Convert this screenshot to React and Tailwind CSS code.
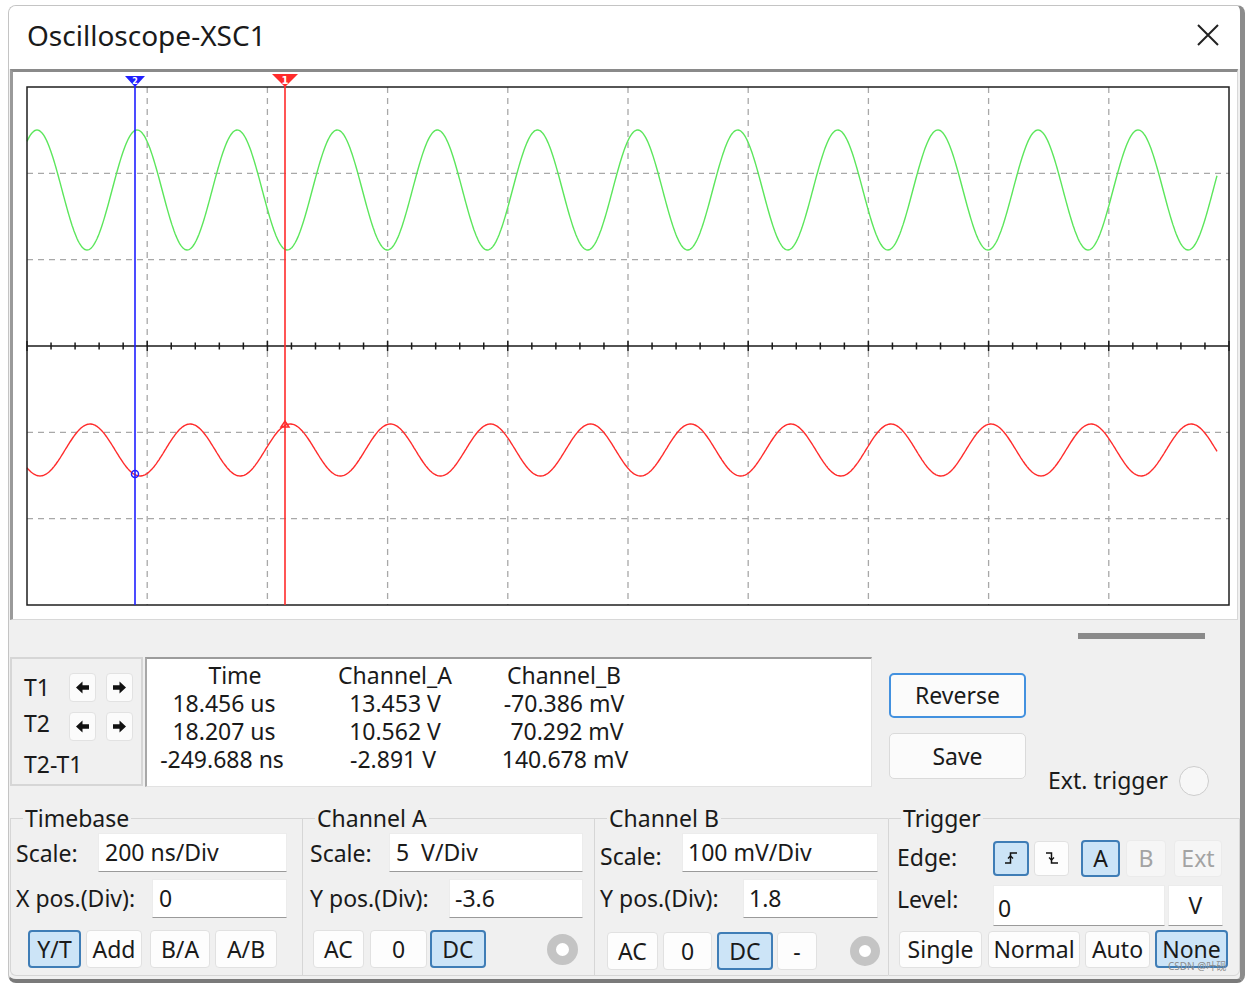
import React from 'react';

// plot geometry, in page pixels
const X0 = 27;
const X1 = 1229;
const Y0 = 87;
const Y1 = 605;
const DX = (X1 - X0) / 10;
const DY = (Y1 - Y0) / 6;

function wavePoints(fn) {
  const pts = [];
  for (let x = 27; x <= 1217; x += 1) pts.push(`${x},${fn(x).toFixed(1)}`);
  return pts.join(' ');
}

const greenWave = wavePoints((x) => 190 - 60 * Math.cos((2 * Math.PI * (x - 37)) / 100.1));
const redWave = wavePoints((x) => 450 + 26 * Math.cos((2 * Math.PI * (x - 40)) / 100.1));

function Scope() {
  const vLines = Array.from({ length: 9 }, (_, i) => X0 + DX * (i + 1));
  const hLines = [1, 2, 4, 5].map((i) => Y0 + DY * i);
  const axisY = Y0 + DY * 3;
  const ticks = Array.from({ length: 51 }, (_, i) => ({ x: X0 + (DX / 5) * i, major: i % 5 === 0 }));

  return (
    <svg width="1224" height="547" viewBox="13 72 1224 547" className="block">
      {vLines.map((x) => (
        <line key={x} x1={x} y1={Y0} x2={x} y2={Y1} stroke="#a8a8a8" strokeWidth="1.3" strokeDasharray="6 5" />
      ))}
      {hLines.map((y) => (
        <line key={y} x1={X0} y1={y} x2={X1} y2={y} stroke="#a8a8a8" strokeWidth="1.3" strokeDasharray="6 5" />
      ))}
      <line x1={X0} y1={axisY} x2={X1} y2={axisY} stroke="#1a1a1a" strokeWidth="1.5" />
      {ticks.map((t) => (
        <line
          key={t.x}
          x1={t.x}
          y1={axisY - (t.major ? 5 : 3.5)}
          x2={t.x}
          y2={axisY + (t.major ? 5 : 3.5)}
          stroke="#1a1a1a"
          strokeWidth="1.5"
        />
      ))}
      <polyline points={greenWave} fill="none" stroke="#5ce65c" strokeWidth="1.4" />
      <polyline points={redWave} fill="none" stroke="#ff2b2b" strokeWidth="1.4" />
      <rect x={X0} y={Y0} width={X1 - X0} height={Y1 - Y0} fill="none" stroke="#1f1f1f" strokeWidth="1.5" />

      {/* cursor 2 (blue) */}
      <line x1="135" y1="80" x2="135" y2={Y1} stroke="#1f1fff" strokeWidth="1.6" />
      <polygon points="125,76 145,76 135,87" fill="#1f1fff" />
      <text x="135" y="84" fontSize="8" fontWeight="700" fill="#fff" textAnchor="middle" fontFamily="DejaVu Sans, sans-serif">2</text>
      <circle cx="135" cy="474" r="3.5" fill="none" stroke="#1f1fff" strokeWidth="1.5" />

      {/* cursor 1 (red) */}
      <line x1="285" y1="80" x2="285" y2={Y1} stroke="#ff2b2b" strokeWidth="1.6" />
      <polygon points="272,74 298,74 285,87" fill="#ff2b2b" />
      <text x="285" y="84" fontSize="10" fontWeight="700" fill="#fff" textAnchor="middle" fontFamily="DejaVu Sans, sans-serif">1</text>
      <path d="M281 427 L285 421 L289 427 Z" fill="none" stroke="#ff2b2b" strokeWidth="1.5" />
    </svg>
  );
}

function Arrow({ dir }) {
  return (
    <svg width="15" height="13" viewBox="0 0 15 13">
      <path
        d={dir === 'left' ? 'M1 6.5 L7.5 0.5 V4.2 H14 V8.8 H7.5 V12.5 Z' : 'M14 6.5 L7.5 0.5 V4.2 H1 V8.8 H7.5 V12.5 Z'}
        fill="#111"
      />
    </svg>
  );
}

function ArrowBtn({ dir }) {
  return (
    <div className="w-[27px] h-[29px] flex items-center justify-center rounded-[4px] bg-[#fbfbfb] border border-[#e2e2e2]">
      <Arrow dir={dir} />
    </div>
  );
}

function Btn({ className, on, off, children }) {
  const look = on
    ? 'bg-[#cce4f7] border-2 border-[#3f7db6] text-[#1a1a1a]'
    : off
    ? 'bg-[#f6f6f6] border border-[#ebebeb] text-[#a3a3a3]'
    : 'bg-[#fdfdfd] border border-[#e1e1e1] text-[#1a1a1a]';
  return (
    <div className={`flex items-center justify-center rounded-[4px] text-[23px] leading-none shrink-0 ${look} ${className}`}>
      {children}
    </div>
  );
}

function Field({ className, children }) {
  return (
    <div className={`bg-white border border-[#ececec] border-b-[#9a9a9a] flex items-center text-[23px] whitespace-pre shrink-0 ${className}`}>
      {children}
    </div>
  );
}

function Radio({ className }) {
  return (
    <div className={`rounded-full border-[9px] border-[#c4c4c4] bg-white shrink-0 ${className}`} />
  );
}

function EdgeIcon({ rising }) {
  return (
    <svg width="14" height="14" viewBox="0 0 14 14">
      <path
        d={rising ? 'M1 12 H6.5 V2 H13' : 'M1 2 H6.5 V12 H13'}
        fill="none"
        stroke="#111"
        strokeWidth="1.5"
      />
      <path
        d={rising ? 'M4 7.5 L6.5 5 L9 7.5' : 'M4 6.5 L6.5 9 L9 6.5'}
        fill="none"
        stroke="#111"
        strokeWidth="1.3"
      />
    </svg>
  );
}

function Group({ title, className, children }) {
  return (
    <fieldset className={`h-[170px] border-t border-l border-b border-[#d6d6d6] shrink-0 ${className}`}>
      <legend className="ml-[12px] px-[2px] text-[23px] leading-[24px]">{title}</legend>
      {children}
    </fieldset>
  );
}

export default function App() {
  return (
    <div className="relative w-[1252px] h-[983px] bg-white pt-[5px] pl-[8px] overflow-hidden font-['Noto_Sans','Open_Sans',sans-serif] text-[#1a1a1a]">
      <div className="w-[1237px] h-[978px] rounded-[8px] overflow-hidden border-t border-l border-[#c4c4c4] border-r-[5px] border-r-[#8c8c8c] border-b-[4px] border-b-[#7a7a7a] bg-[#f0f0f0] flex flex-col">
        {/* title bar */}
        <div className="h-[63px] shrink-0 bg-white flex items-center justify-between pl-[18px] pr-[21px] pb-[6px]">
          <div className="text-[28px]">Oscilloscope-XSC1</div>
          <svg width="22" height="22" viewBox="0 0 22 22" className="mt-[1px]">
            <path d="M1 1 L21 21 M21 1 L1 21" stroke="#222" strokeWidth="2" />
          </svg>
        </div>

        {/* scope screen */}
        <div className="ml-[1px] w-[1228px] h-[551px] shrink-0 bg-white border-t-[3px] border-l-[3px] border-t-[#8a8a8a] border-l-[#9a9a9a] border-r border-b border-r-[#d8d8d8] border-b-[#d8d8d8]">
          <Scope />
        </div>

        {/* control panel */}
        <div className="flex-1 flex flex-col">
          <div className="h-[37px] shrink-0 flex justify-end pt-[13px] pr-[35px]">
            <div className="w-[127px] h-[6px] bg-[#8a8a8a]" />
          </div>

          <div className="h-[130px] shrink-0 flex items-start">
            {/* cursor stepping */}
            <div className="ml-[1px] w-[133px] h-[129px] border-2 border-[#d6d6d6] text-[23px]">
              <div className="mt-[14px] h-[29px] flex items-center">
                <div className="w-[57px] pl-[12px]">T1</div>
                <ArrowBtn dir="left" />
                <div className="w-[10px]" />
                <ArrowBtn dir="right" />
              </div>
              <div className="mt-[10px] h-[29px] flex items-center">
                <div className="w-[57px] pl-[12px] -mt-[6px]">T2</div>
                <ArrowBtn dir="left" />
                <div className="w-[10px]" />
                <ArrowBtn dir="right" />
              </div>
              <div className="mt-[9px] pl-[12px] leading-[28px]">T2-T1</div>
            </div>

            {/* readout */}
            <div className="ml-[2px] w-[727px] h-[130px] bg-white border-t-2 border-l-2 border-t-[#9c9c9c] border-l-[#a8a8a8] border-r border-b border-r-[#e2e2e2] border-b-[#e2e2e2] pt-[2px]">
              <div className="grid grid-cols-[154px_188px_150px] text-[23px] leading-[28px] text-center">
                <div className="pl-[22px]">Time</div>
                <div>Channel_A</div>
                <div>Channel_B</div>
                <div>18.456 us</div>
                <div>13.453 V</div>
                <div>-70.386 mV</div>
                <div>18.207 us</div>
                <div>10.562 V</div>
                <div className="pl-[6px]">70.292 mV</div>
                <div className="pr-[4px]">-249.688 ns</div>
                <div className="pr-[4px]">-2.891 V</div>
                <div className="pl-[2px]">140.678 mV</div>
              </div>
            </div>

            <div className="ml-[17px] w-[137px] flex flex-col">
              <div className="mt-[16px] h-[45px] flex items-center justify-center rounded-[5px] bg-[#fbfbfb] border-2 border-[#4391df] text-[23px]">
                Reverse
              </div>
              <div className="mt-[15px] h-[46px] flex items-center justify-center rounded-[5px] bg-[#fbfbfb] border border-[#dadada] text-[23px]">
                Save
              </div>
            </div>

            <div className="ml-[22px] mt-[108px] h-[31px] flex items-center text-[23px]">
              <span>Ext. trigger</span>
              <div className="ml-[11px] w-[30px] h-[30px] rounded-full border border-[#cdcdcd] bg-[#f7f7f7]" />
            </div>
          </div>

          {/* settings groups */}
          <div className="mt-[19px] flex text-[23px]">
            <Group title="Timebase" className="ml-[1px] w-[292px] rounded-bl-[6px]">
              <div className="mt-[3px] h-[39px] flex items-center">
                <div className="w-[87px] pl-[5px] pt-[2px]">Scale:</div>
                <Field className="w-[189px] h-[39px] pl-[6px]">200 ns/Div</Field>
              </div>
              <div className="mt-[7px] h-[39px] flex items-center">
                <div className="w-[141px] pl-[5px]">X pos.(Div):</div>
                <Field className="w-[135px] h-[39px] pl-[6px]">0</Field>
              </div>
              <div className="mt-[12px] h-[38px] flex items-center">
                <Btn on className="ml-[17px] w-[53px] h-[38px]">Y/T</Btn>
                <Btn className="ml-[5px] w-[56px] h-[38px]">Add</Btn>
                <Btn className="ml-[8px] w-[60px] h-[38px]">B/A</Btn>
                <Btn className="ml-[5px] w-[62px] h-[38px]">A/B</Btn>
              </div>
            </Group>

            <Group title="Channel A" className="w-[292px]">
              <div className="mt-[3px] h-[39px] flex items-center">
                <div className="w-[86px] pl-[7px] pt-[2px]">Scale:</div>
                <Field className="w-[194px] h-[39px] pl-[6px]">5  V/Div</Field>
              </div>
              <div className="mt-[7px] h-[39px] flex items-center">
                <div className="w-[146px] pl-[7px]">Y pos.(Div):</div>
                <Field className="w-[134px] h-[39px] pl-[5px]">-3.6</Field>
              </div>
              <div className="mt-[12px] h-[38px] flex items-center">
                <Btn className="ml-[10px] w-[51px] h-[38px]">AC</Btn>
                <Btn className="ml-[6px] w-[57px] h-[38px]">0</Btn>
                <Btn on className="ml-[3px] w-[56px] h-[38px]">DC</Btn>
                <Radio className="ml-[61px] w-[31px] h-[31px]" />
              </div>
            </Group>

            <Group title="Channel B" className="w-[294px]">
              <div className="mt-[3px] h-[39px] flex items-center">
                <div className="w-[87px] pl-[5px] pt-[8px]">Scale:</div>
                <Field className="w-[196px] h-[39px] pl-[5px]">100 mV/Div</Field>
              </div>
              <div className="mt-[7px] h-[39px] flex items-center">
                <div className="w-[148px] pl-[5px]">Y pos.(Div):</div>
                <Field className="w-[135px] h-[39px] pl-[5px]">1.8</Field>
              </div>
              <div className="mt-[14px] h-[38px] flex items-center">
                <Btn className="ml-[12px] w-[51px] h-[38px]">AC</Btn>
                <Btn className="ml-[5px] w-[49px] h-[38px]">0</Btn>
                <Btn on className="ml-[5px] w-[56px] h-[38px]">DC</Btn>
                <Btn className="ml-[4px] w-[40px] h-[38px]">-</Btn>
                <Radio className="ml-[33px] w-[30px] h-[30px]" />
              </div>
            </Group>

            <Group title="Trigger" className="w-[352px] border-r rounded-br-[6px]">
              <div className="mt-[9px] h-[38px] flex items-center">
                <div className="w-[104px] pl-[8px] -mt-[2px]">Edge:</div>
                <Btn on className="w-[36px] h-[35px]">
                  <EdgeIcon rising />
                </Btn>
                <Btn className="ml-[5px] w-[35px] h-[35px]">
                  <EdgeIcon />
                </Btn>
                <Btn on className="ml-[12px] w-[39px] h-[37px]">A</Btn>
                <Btn off className="ml-[6px] w-[40px] h-[37px]">B</Btn>
                <Btn off className="ml-[8px] w-[48px] h-[37px]">Ext</Btn>
              </div>
              <div className="mt-[8px] h-[41px] flex items-center">
                <div className="w-[104px] pl-[8px] -mt-[12px]">Level:</div>
                <Field className="w-[172px] h-[41px] pl-[4px] pt-[6px]">0</Field>
                <Field className="ml-[3px] w-[55px] h-[41px] justify-center">V</Field>
              </div>
              <div className="mt-[4px] h-[38px] flex items-center">
                <Btn className="ml-[10px] w-[83px] h-[37px]">Single</Btn>
                <Btn className="ml-[6px] w-[92px] h-[37px]">Normal</Btn>
                <Btn className="ml-[5px] w-[65px] h-[37px]">Auto</Btn>
                <Btn on className="ml-[5px] w-[73px] h-[38px]">None</Btn>
              </div>
            </Group>
          </div>
        </div>
      </div>

      <div className="absolute left-[1168px] top-[960px] text-[10px] leading-[12px] text-[#8c8c8c] font-['Noto_Sans','Noto_Sans_CJK_SC',sans-serif]">
        CSDN @叶砚
      </div>
    </div>
  );
}
